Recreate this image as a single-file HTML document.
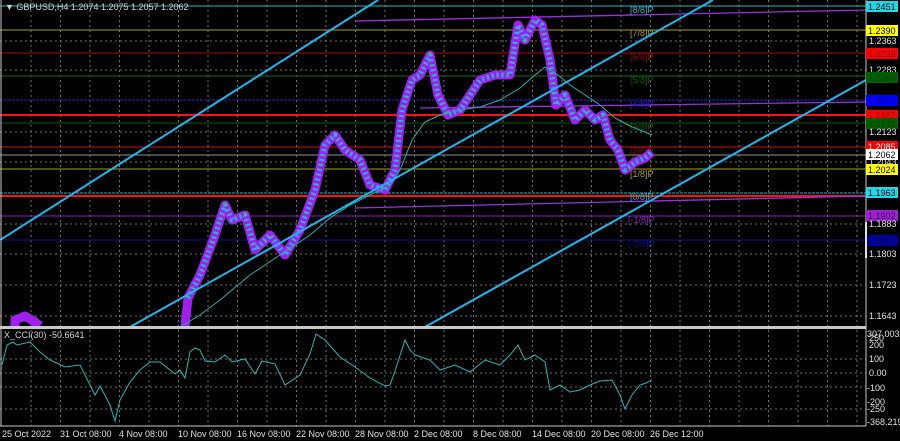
<!DOCTYPE html>
<html><head><meta charset="utf-8"><style>
html,body{margin:0;padding:0;background:#000;width:900px;height:441px;overflow:hidden}
svg{display:block;font-family:"Liberation Sans",sans-serif}
</style></head><body>
<svg width="900" height="441" viewBox="0 0 900 441" xmlns="http://www.w3.org/2000/svg">
<rect width="900" height="441" fill="#000"/>
<path stroke="#8a8a8a" stroke-width="1" stroke-dasharray="2,3" opacity="0.8" fill="none" d="M31 0V426M60.5 0V426M90 0V426M119.5 0V426M149 0V426M178.5 0V426M208 0V426M237.5 0V426M267 0V426M296.5 0V426M326 0V426M355.5 0V426M385 0V426M414.5 0V426M444 0V426M473.5 0V426M503 0V426M532.5 0V426M562 0V426M591.5 0V426M621 0V426M650.5 0V426M680 0V426M709.5 0V426M739 0V426M768.5 0V426M798 0V426M827.5 0V426M857 0V426M0 41H866M0 70H866M0 132H866M0 162H866M0 224H866M0 254H866M0 285H866M0 316H866M0 359H866M0 373H866M0 387H866M0 409H866"/>
<line x1="0" y1="6" x2="866" y2="6" stroke="#1fb8c8" stroke-width="1"/>
<line x1="355" y1="21" x2="866" y2="10" stroke="#9a30e0" stroke-width="1.3"/>
<line x1="0" y1="30" x2="866" y2="30" stroke="#a8a020" stroke-width="1"/>
<line x1="0" y1="53" x2="866" y2="53" stroke="#8a0a0a" stroke-width="1.3"/>
<line x1="0" y1="76" x2="866" y2="76" stroke="#0a5a0a" stroke-width="1.3"/>
<line x1="0" y1="100" x2="866" y2="100" stroke="#2020c8" stroke-width="1" stroke-dasharray="3,1"/>
<line x1="420" y1="108" x2="866" y2="102" stroke="#9a30e0" stroke-width="1.3"/>
<line x1="0" y1="115" x2="866" y2="115" stroke="#ff1010" stroke-width="2"/>
<line x1="0" y1="123" x2="866" y2="123" stroke="#0a4a0a" stroke-width="1.3"/>
<line x1="0" y1="147" x2="866" y2="147" stroke="#d01010" stroke-width="1"/>
<line x1="0" y1="155" x2="866" y2="155" stroke="#909090" stroke-width="1"/>
<line x1="0" y1="169" x2="866" y2="169" stroke="#a8a020" stroke-width="1"/>
<line x1="0" y1="193" x2="866" y2="193" stroke="#1fb8c8" stroke-width="1" stroke-dasharray="3,1"/>
<line x1="0" y1="196" x2="866" y2="196" stroke="#ff1010" stroke-width="2"/>
<line x1="355" y1="208" x2="866" y2="196" stroke="#9a30e0" stroke-width="1.3"/>
<line x1="0" y1="216" x2="866" y2="216" stroke="#8a20c0" stroke-width="1"/>
<line x1="0" y1="240" x2="866" y2="240" stroke="#101090" stroke-width="1"/>
<g font-size="9">
<text x="630" y="13" fill="#1fb8c8">[8/8]P</text>
<text x="630" y="36" fill="#a8a020">[7/8]P</text>
<text x="630" y="60" fill="#8a0a0a">[6/8]P</text>
<text x="630" y="83" fill="#0a5a0a">[5/8]P</text>
<text x="630" y="107" fill="#2020c8">[4/8]P</text>
<text x="630" y="130" fill="#0a5a0a">[3/8]P</text>
<text x="630" y="154" fill="#8a0a0a">[2/8]P</text>
<text x="630" y="177" fill="#a8a020">[1/8]P</text>
<text x="630" y="200" fill="#1fb8c8">[0/8]P</text>
<text x="628" y="223" fill="#8a20c0">[-1/8]P</text>
<text x="628" y="247" fill="#101090">[-2/8]P</text>
</g>
<!-- price action approximated -->
<g fill="none" stroke-linejoin="round">
<polyline stroke="#a020f0" stroke-width="9" points="15,326 15,320 25,316 35,322 40,326"/>
<polyline stroke="#a020f0" stroke-width="9" points="185,326 188,298 200,275 215,235 225,205 232,220 245,215 255,250 270,235 285,255 300,230 315,190 325,145 335,135 345,150 360,160 370,185 385,190 395,170 402,110 412,80 420,75 430,55 438,95 448,115 460,110 470,95 480,80 495,75 510,75 518,25 525,40 535,20 542,25 550,60 556,105 565,95 575,120 585,110 595,120 603,115 610,140 618,150 625,170 635,162 645,158 652,152"/>
<polyline stroke="#1ab8f0" stroke-width="5" stroke-dasharray="2,3" points="188,298 200,275 215,235 225,205 232,220 245,215 255,250 270,235 285,255 300,230 315,190 325,145 335,135 345,150 360,160 370,185 385,190 395,170 402,110 412,80 420,75 430,55 438,95 448,115 460,110 470,95 480,80 495,75 510,75 518,25 525,40 535,20 542,25 550,60 556,105 565,95 575,120 585,110 595,120 603,115 610,140 618,150 625,170 635,162 645,158 652,152"/>
<polyline stroke="#30c060" stroke-width="4" stroke-dasharray="1,9" points="188,298 200,275 215,235 225,205 232,220 245,215 255,250 270,235 285,255 300,230 315,190 325,145 335,135 345,150 360,160 370,185 385,190 395,170 402,110 412,80 420,75 430,55 438,95 448,115 460,110 470,95 480,80 495,75 510,75 518,25 525,40 535,20 542,25 550,60 556,105 565,95 575,120 585,110 595,120 603,115 610,140 618,150 625,170 635,162 645,158 652,152"/>
</g>
<polyline fill="none" stroke="#20b0b0" stroke-width="1" points="180,327 200,315 220,300 250,275 280,255 310,235 330,218 350,205 370,195 390,185 400,170 412,140 425,122 440,115 460,110 480,107 500,100 520,88 535,75 545,67 558,75 570,85 585,95 600,105 615,118 630,126 652,135"/>
<line x1="0" y1="240" x2="378" y2="0" stroke="#1ab8f0" stroke-width="2"/>
<line x1="130" y1="327" x2="713" y2="0" stroke="#1ab8f0" stroke-width="2"/>
<line x1="425" y1="327" x2="866" y2="80" stroke="#1ab8f0" stroke-width="2"/>
<rect x="0" y="326" width="866" height="3" fill="#c8c8c8"/>
<line x1="866" y1="0" x2="866" y2="426" stroke="#c8c8c8"/>
<line x1="0" y1="426" x2="866" y2="426" stroke="#c8c8c8"/>
<line x1="1" y1="0" x2="1" y2="426" stroke="#c8c8c8"/>
<polyline fill="none" stroke="#20b8b8" stroke-width="1" points="2,365 7,345 13,342 17,345 30,342 40,352 50,360 65,367 80,365 95,395 100,386 110,405 115,421 120,400 130,382 140,370 150,362 160,362 175,374 180,370 185,378 190,352 195,348 200,350 205,361 215,362 225,355 232,362 245,359 255,374 262,361 275,364 285,385 300,375 310,354 316,334 325,340 340,357 355,367 370,378 385,386 390,385 395,371 405,340 410,350 415,355 430,360 440,370 455,365 470,372 485,360 500,365 510,355 518,345 525,360 535,355 545,362 550,390 560,385 570,392 580,390 590,385 600,381 612,380 620,395 625,409 632,395 640,385 646,383 652,380"/>
<text x="5" y="10" font-size="9" fill="#d0d0d0">▼ GBPUSD,H4  1.2074 1.2075 1.2057 1.2062</text>
<text x="4" y="338" font-size="9" fill="#d0d0d0">X_CCI(30) -50.6641</text>
<g font-size="9">
<rect x="866" y="1" width="32" height="11" fill="#1fd8e8"/><text x="868" y="10" fill="#000">1.2451</text>
<rect x="866" y="25" width="32" height="11" fill="#ffff00"/><text x="868" y="34" fill="#000">1.2390</text>
<text x="869" y="44" fill="#e0e0e0">1.2363</text>
<rect x="866" y="48" width="32" height="11" fill="#ff0000"/><text x="868" y="57" fill="#600">1.2329</text>
<text x="869" y="73" fill="#e0e0e0">1.2283</text>
<rect x="866" y="72" width="32" height="11" fill="#006000"/><text x="868" y="81" fill="#0a3a0a">1.2268</text>
<rect x="866" y="95" width="32" height="11" fill="#0000ff"/><text x="868" y="104" fill="#000080">1.2207</text>
<rect x="866" y="110" width="32" height="11" fill="#ff0000"/><text x="868" y="119" fill="#600">1.2167</text>
<rect x="866" y="118" width="32" height="11" fill="#006000"/><text x="868" y="127" fill="#0a3a0a">1.2146</text>
<text x="869" y="135" fill="#e0e0e0">1.2123</text>
<rect x="866" y="141" width="32" height="11" fill="#ff0000"/><text x="868" y="150" fill="#fff">1.2085</text>
<text x="869" y="165" fill="#e0e0e0">1.2043</text>
<rect x="866" y="149" width="32" height="11" fill="#ffffff"/><text x="868" y="158" fill="#000">1.2062</text>
<rect x="866" y="164" width="32" height="11" fill="#ffff00"/><text x="868" y="173" fill="#000">1.2024</text>
<rect x="866" y="187" width="32" height="11" fill="#1fd8e8"/><text x="868" y="196" fill="#000">1.1963</text>
<rect x="866" y="210" width="32" height="11" fill="#9a20d0"/><text x="868" y="219" fill="#400060">1.1902</text>
<text x="869" y="227" fill="#e0e0e0">1.1883</text>
<rect x="866" y="235" width="32" height="11" fill="#0000a0"/><text x="868" y="244" fill="#000050">1.1842</text>
<rect x="865" y="222" width="2" height="36" fill="#e0e0e0"/>
<text x="869" y="257" fill="#e0e0e0">1.1803</text>
<text x="869" y="288" fill="#e0e0e0">1.1723</text>
<text x="869" y="319" fill="#e0e0e0">1.1643</text>
<text x="867" y="337" fill="#e0e0e0">307.0035</text>
<text x="869" y="341" fill="#e0e0e0">250</text>
<text x="869" y="348" fill="#e0e0e0">200</text>
<text x="869" y="362" fill="#e0e0e0">100</text>
<text x="869" y="376" fill="#e0e0e0">0.00</text>
<text x="867" y="391" fill="#e0e0e0">-100</text>
<text x="867" y="405" fill="#e0e0e0">-200</text>
<text x="867" y="412" fill="#e0e0e0">-250</text>
<text x="867" y="425" fill="#e0e0e0">-368.2199</text>
</g>
<g font-size="9" fill="#e0e0e0">
<text x="2" y="437">25 Oct 2022</text>
<text x="60" y="437">31 Oct 08:00</text>
<text x="119" y="437">4 Nov 08:00</text>
<text x="178" y="437">10 Nov 08:00</text>
<text x="237" y="437">16 Nov 08:00</text>
<text x="296" y="437">22 Nov 08:00</text>
<text x="355" y="437">28 Nov 08:00</text>
<text x="414" y="437">2 Dec 08:00</text>
<text x="473" y="437">8 Dec 08:00</text>
<text x="532" y="437">14 Dec 08:00</text>
<text x="591" y="437">20 Dec 08:00</text>
<text x="650" y="437">26 Dec 12:00</text>
</g>
</svg>
</body></html>
